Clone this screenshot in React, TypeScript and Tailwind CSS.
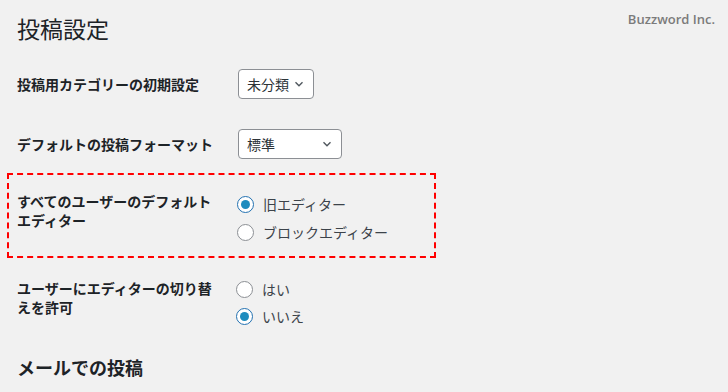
import { useState } from "react";

const font = {
  fontFamily: '"Noto Sans CJK JP", "Noto Sans", sans-serif',
};

function Radio({
  checked,
  label,
  onSelect,
}: {
  checked: boolean;
  label: string;
  onSelect: () => void;
}) {
  return (
    <label className="flex items-center h-[16px] cursor-pointer" onClick={onSelect}>
      <span
        className={`w-[17px] h-[17px] rounded-full border bg-white flex items-center justify-center ${
          checked ? "border-[#2271b1]" : "border-[#8c8f94]"
        }`}
      >
        {checked && <span className="w-[9px] h-[9px] rounded-full bg-[#1e8cbe]" />}
      </span>
      <span className="ml-[9px] text-[14px] text-[#3c434a] leading-none">{label}</span>
    </label>
  );
}

function Select({ value, width }: { value: string; width: string }) {
  return (
    <div
      className={`${width} h-[30px] bg-white border border-[#8c8f94] rounded-[4px] flex items-center justify-between pl-[8px] pr-[7px]`}
    >
      <span className="text-[14px] text-[#2c3338] leading-none">{value}</span>
      <svg width="14" height="14" viewBox="0 0 20 20" className="text-[#50575e]">
        <path d="M5 7.5l5 5 5-5" fill="none" stroke="currentColor" strokeWidth="2" />
      </svg>
    </div>
  );
}

export default function App() {
  const [editor, setEditor] = useState("classic");
  const [allowSwitch, setAllowSwitch] = useState(false);

  return (
    <div className="w-[728px] h-[392px] bg-[#f1f1f1] overflow-hidden relative" style={font}>
      <div
        className="absolute right-[13px] top-[10px] text-[13px] font-semibold text-[#7b7b7b]"
        style={{ fontFamily: '"Open Sans", sans-serif' }}
      >
        Buzzword Inc.
      </div>

      <h1 className="ml-[17px] pt-[13px] text-[23px] leading-[30px] font-normal text-[#1d2327]">
        投稿設定
      </h1>

      <div className="mt-[26px] ml-[17px] flex items-center h-[30px]">
        <div className="w-[221px] text-[14px] font-bold text-[#1d2327]">投稿用カテゴリーの初期設定</div>
        <Select value="未分類" width="w-[76px]" />
      </div>

      <div className="mt-[30px] ml-[17px] flex items-center h-[30px]">
        <div className="w-[221px] text-[14px] font-bold text-[#1d2327]">デフォルトの投稿フォーマット</div>
        <Select value="標準" width="w-[104px]" />
      </div>

      <div className="mt-[14px] ml-[7px] w-[429px] h-[85px] border-2 border-dashed border-[#ff0000] flex">
        <div className="ml-[8px] mt-[17px] w-[220px] text-[14px] font-bold leading-[19px] text-[#1d2327]">
          すべてのユーザーのデフォルト
          <br />
          エディター
        </div>
        <div className="mt-[21px] flex flex-col gap-[12px]">
          <Radio checked={editor === "classic"} label="旧エディター" onSelect={() => setEditor("classic")} />
          <Radio checked={editor === "block"} label="ブロックエディター" onSelect={() => setEditor("block")} />
        </div>
      </div>

      <div className="mt-[21px] ml-[17px] flex">
        <div className="w-[219px] text-[14px] font-bold leading-[19px] text-[#1d2327]">
          ユーザーにエディターの切り替
          <br />
          えを許可
        </div>
        <div className="mt-[2px] flex flex-col gap-[11px]">
          <Radio checked={allowSwitch} label="はい" onSelect={() => setAllowSwitch(true)} />
          <Radio checked={!allowSwitch} label="いいえ" onSelect={() => setAllowSwitch(false)} />
        </div>
      </div>

      <h2 className="ml-[17px] mt-[31px] text-[18px] leading-[24px] font-bold text-[#1d2327]">メールでの投稿</h2>
    </div>
  );
}
